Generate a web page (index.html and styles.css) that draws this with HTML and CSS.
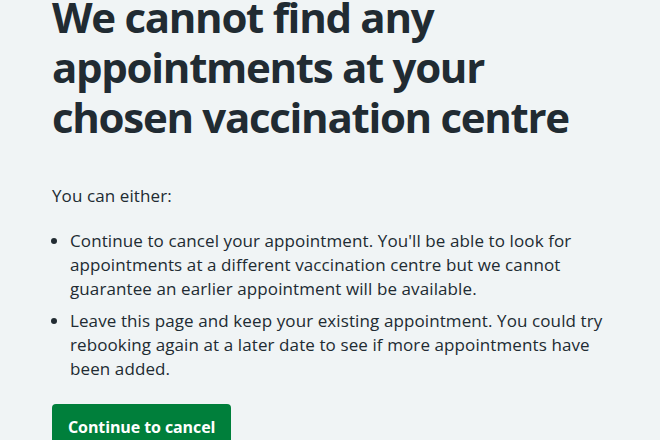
FILE: index.html
```html
<!DOCTYPE html>
<html lang="en">
<head>
    <meta charset="UTF-8">
    <meta name="viewport" content="width=device-width, initial-scale=1.0">
    <title>No appointments available</title>
    <link rel="stylesheet" href="styles.css">
</head>
<body>
    <main class="page">
        <h1 class="page-title">We cannot find any appointments at your chosen vaccination centre</h1>

        <p class="body-text">You can either:</p>

        <ul class="option-list">
            <li>Continue to cancel your appointment. You'll be able to look for appointments at a different vaccination centre but we cannot guarantee an earlier appointment will be available.</li>
            <li>Leave this page and keep your existing appointment. You could try rebooking again at a later date to see if more appointments have been added.</li>
        </ul>

        <button class="button" type="button">Continue to cancel</button>
    </main>
</body>
</html>
```

FILE: styles.css
```css
body {
    margin: 0;
    padding: 0;
    background-color: #f0f4f5;
    color: #212b32;
    font-family: "Open Sans", Arial, sans-serif;
}

.page {
    padding: 0 32px 0 52px;
}

.page-title {
    margin: -8px 0 42px;
    font-size: 42px;
    line-height: 50px;
    font-weight: 700;
    letter-spacing: -1.3px;
}

.body-text {
    margin: 0 0 21px;
    font-size: 17px;
    line-height: 24px;
    letter-spacing: 0.1px;
}

.option-list {
    margin: 0 0 23px;
    padding-left: 18px;
    list-style-type: disc;
    font-size: 17px;
    line-height: 24px;
    letter-spacing: 0.1px;
}

.option-list li {
    margin-bottom: 8px;
}

.option-list li:last-child {
    margin-bottom: 0;
}

.button {
    display: inline-block;
    margin: 0;
    padding: 11px 16px 13px;
    border: none;
    border-radius: 4px;
    background-color: #007f3b;
    box-shadow: 0 4px 0 #00401e;
    color: #fff;
    font-family: inherit;
    font-size: 16px;
    line-height: 24px;
    font-weight: 700;
    letter-spacing: -0.1px;
    cursor: pointer;
}
```
